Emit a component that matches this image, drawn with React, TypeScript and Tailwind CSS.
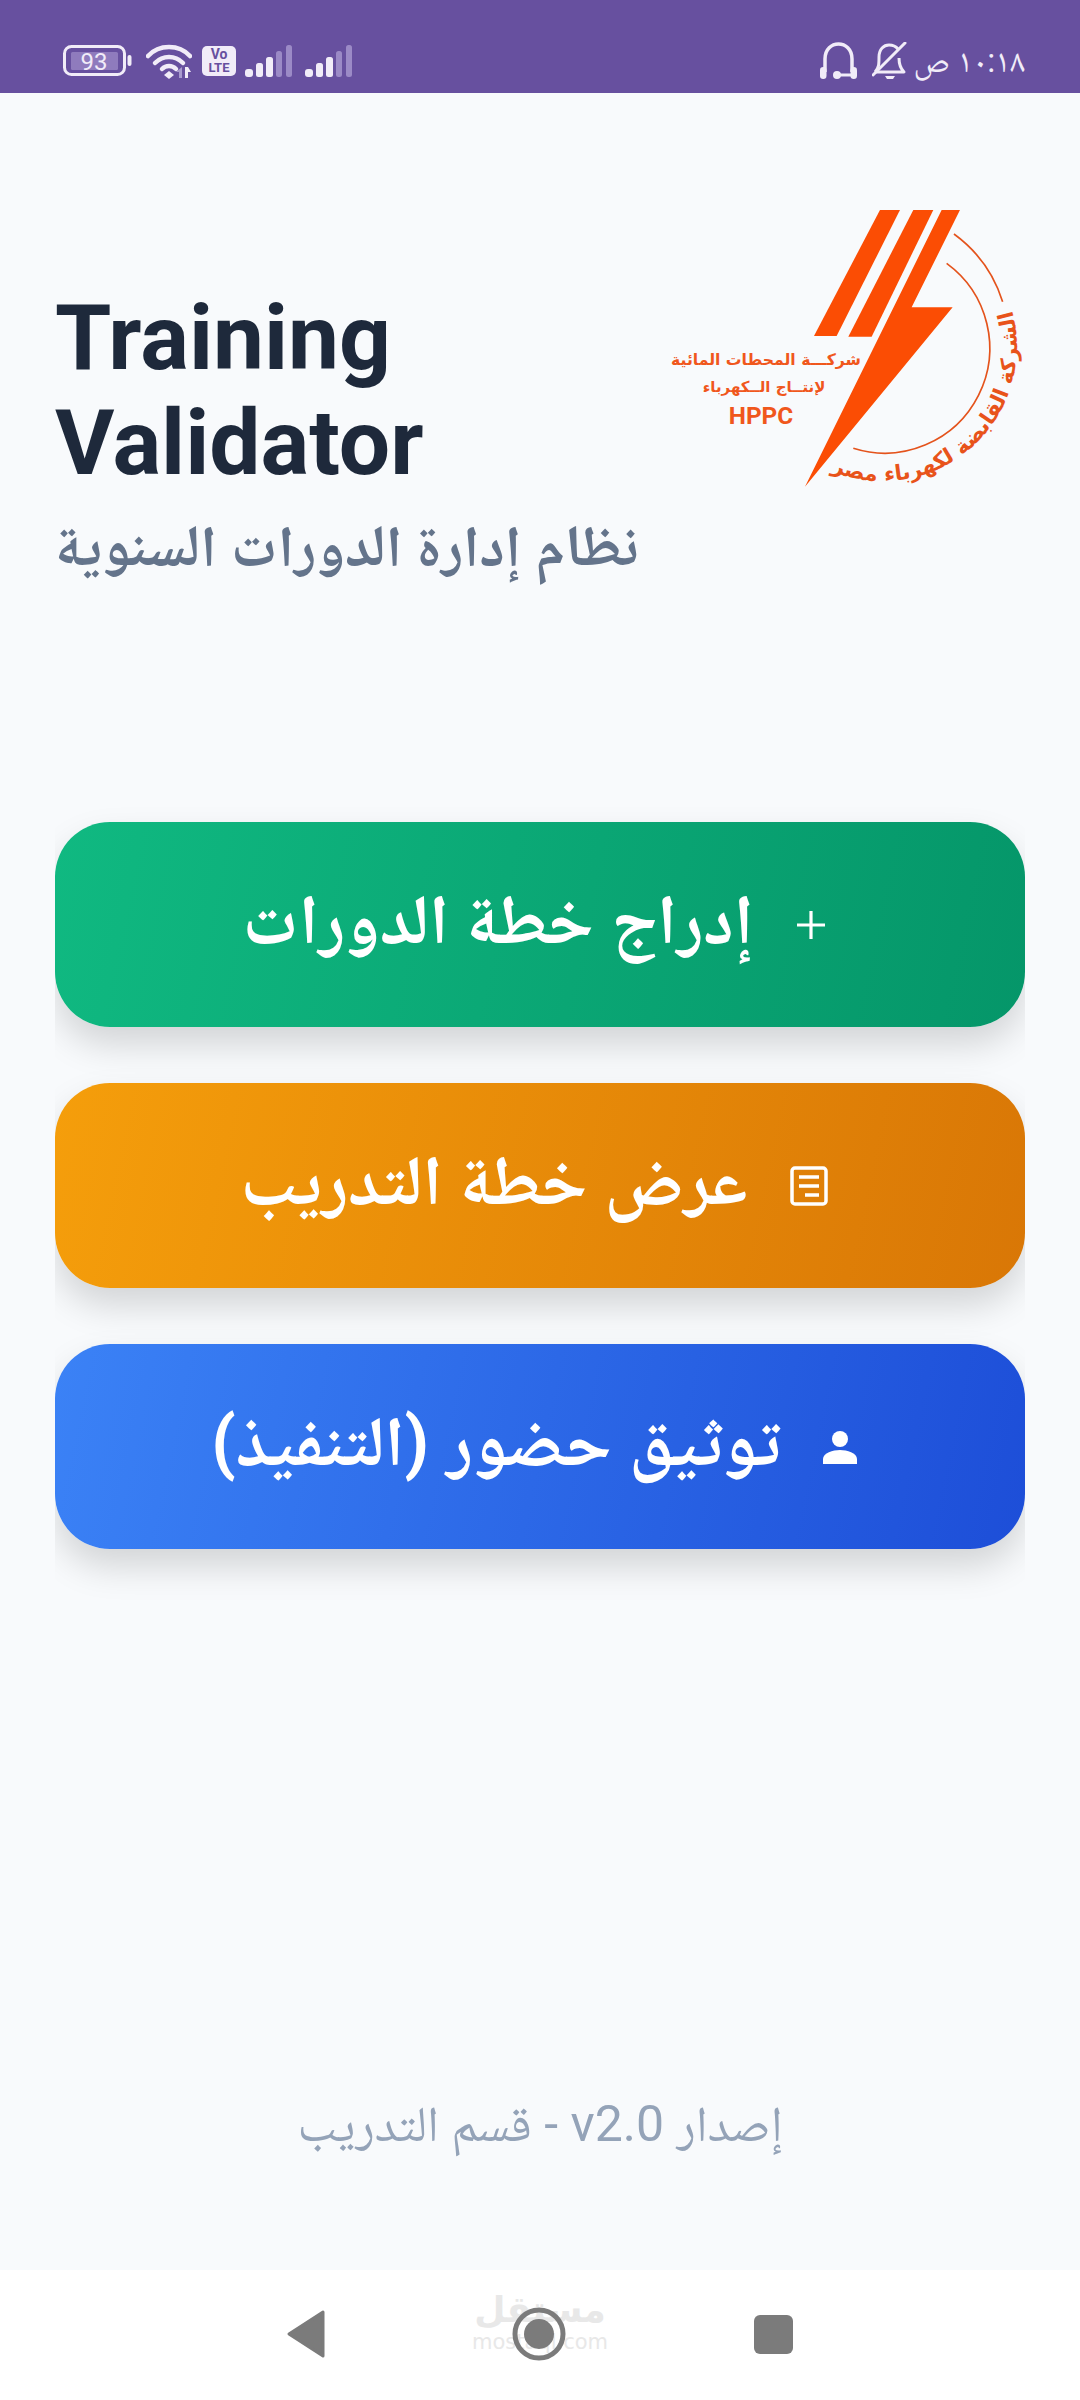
import React from 'react';

const arabic = "font-['Roboto','Noto_Naskh_Arabic','DejaVu_Sans',sans-serif]";

const Battery = () => (
  <svg width="70" height="32" viewBox="0 0 70 32" className="shrink-0">
    <rect x="1.5" y="1.5" width="60" height="28" rx="7" fill="none" stroke="#f1ecf8" strokeWidth="3" />
    <rect x="8" y="7" width="47" height="18" rx="1.5" fill="#8f7bbd" />
    <rect x="64.5" y="10" width="4" height="11" rx="2" fill="#f1ecf8" />
    <text x="31" y="24.5" textAnchor="middle" fontSize="24" fontFamily="Roboto, sans-serif" fill="#f1ecf8">93</text>
  </svg>
);

const Wifi = () => (
  <svg width="46" height="36" viewBox="0 0 46 36" className="shrink-0">
    <g fill="none" stroke="#f1ecf8" strokeWidth="4.5" strokeLinecap="round">
      <path d="M2 13C13 1 33 1 44 13" />
      <path d="M9 20C17 12 29 12 37 20" />
      <path d="M16 26C20 22 26 22 30 26" />
    </g>
    <path d="M23 28l5 4-5 4-5-4z" fill="#f1ecf8" />
    <path d="M36 24v11h-3v-6h-3z" fill="#a99bcf" />
    <path d="M39 35V24h3l3 5h-3v6z" fill="#f1ecf8" />
  </svg>
);

const VoLte = () => (
  <div className="w-[34px] h-[30px] rounded-[5px] bg-[#f1ecf8] flex flex-col items-center justify-center text-[#67509f] font-['Roboto',sans-serif] font-bold leading-[13px] shrink-0">
    <span className="text-[14px]">Vo</span>
    <span className="text-[13px]">LTE</span>
  </div>
);

const Signal = () => (
  <svg width="48" height="32" viewBox="0 0 48 32" className="shrink-0">
    <rect x="0" y="24" width="8" height="8" rx="3" fill="#f1ecf8" />
    <rect x="11" y="18" width="7" height="14" rx="2.5" fill="#f1ecf8" />
    <rect x="21" y="12" width="7" height="20" rx="2.5" fill="#f1ecf8" />
    <rect x="31" y="6" width="6" height="26" rx="2.5" fill="#9b8ac6" />
    <rect x="41" y="0" width="6" height="32" rx="2.5" fill="#9b8ac6" />
  </svg>
);

const Headphones = () => (
  <svg width="39" height="38" viewBox="0 0 39 38" className="shrink-0">
    <path d="M6 30V17C6 -3 33 -3 33 17V30" fill="none" stroke="#f1ecf8" strokeWidth="3.5" />
    <rect x="1" y="25" width="6.500" height="12" rx="3.2" fill="#f1ecf8" />
    <rect x="31.500" y="25" width="6.500" height="12" rx="3.2" fill="#f1ecf8" />
    <circle cx="18" cy="33" r="4" fill="#f1ecf8" />
    <path d="M18 33h15" stroke="#f1ecf8" strokeWidth="3" />
  </svg>
);

const BellOff = () => (
  <svg width="35" height="38" viewBox="0 0 35 38" className="shrink-0">
    <g fill="none" stroke="#f1ecf8" strokeWidth="3" strokeLinejoin="round">
      <path d="M3 30c4-4 4-8 4-15C7 7 12 3 17 3c4 0 7 1.500 9 4" />
      <path d="M27 16c0 6 1 10 5 14H3" />
    </g>
    <path d="M1 33L33 1" stroke="#f1ecf8" strokeWidth="3" strokeLinecap="round" />
    <path d="M13 34h10l-2 3h-6z" fill="#f1ecf8" />
  </svg>
);

const StatusBar = () => (
  <div className="h-[93px] bg-[#67509f] flex items-start justify-between pl-[63px] pr-[55px] pt-[42px] shrink-0">
    <div className="flex items-center h-[38px]">
      <Battery />
      <div className="w-[13px]" />
      <Wifi />
      <div className="w-[10px]" />
      <VoLte />
      <div className="w-[9px]" />
      <Signal />
      <div className="w-[12px]" />
      <Signal />
    </div>
    <div className="flex items-center h-[38px]">
      <Headphones />
      <div className="w-[14px]" />
      <BellOff />
      <div className="w-[6px]" />
      <span dir="rtl" className={`${arabic} text-[33px] leading-[38px] text-[#f1ecf8]`}>١٠:١٨ ص</span>
    </div>
  </div>
);

const Logo = () => (
  <svg width="375" height="300" viewBox="660 205 375 300" className="shrink-0 -mr-[10px]">
    <g transform="translate(640 190) scale(0.3333)">
      <g fill="#fb4d04">
        <polygon points="720,60 780,60 590,438 522,438" />
        <polygon points="820,60 880,60 695,440 625,440" />
        <polygon points="905,60 960,60 815,352 938,352 495,890" />
      </g>
      <g fill="none" stroke="#e4531c" strokeWidth="5">
        <path d="M942,132 A400,400 0 0 1 1088,335" />
        <path d="M920,220 A315,315 0 0 1 640,775" />
      </g>
      <path id="logo-ring" d="M574,843 A403,403 0 0 0 1116,362" fill="none" />
      <text fontFamily="'DejaVu Sans', sans-serif" fontWeight="700" fontSize="64" fill="#e8531a" textAnchor="middle">
        <textPath href="#logo-ring" startOffset="50%">الشركة القابضة لكهرباء مصر</textPath>
      </text>
      <g fontFamily="'DejaVu Sans', sans-serif" fontWeight="700" fill="#f0571c" textAnchor="middle">
        <text x="378" y="524" fontSize="47" direction="rtl">شركـــة المحطات المائية</text>
        <text x="372" y="606" fontSize="45" direction="rtl">لإنتــاج الــكهرباء</text>
        <text x="363" y="701" fontSize="73" fontFamily="Roboto, sans-serif">HPPC</text>
      </g>
    </g>
  </svg>
);

const PlusIcon = () => (
  <svg width="30" height="30" viewBox="0 0 30 30" className="shrink-0">
    <path d="M15 1v28M1 15h28" stroke="#fff" strokeWidth="3.2" />
  </svg>
);

const ArticleIcon = () => (
  <svg width="38" height="40" viewBox="0 0 38 40" className="shrink-0">
    <rect x="2" y="2" width="34" height="36" rx="3" fill="none" stroke="#fff" strokeWidth="3.5" />
    <path d="M9 11h20M9 20h20M15 29h14" stroke="#fff" strokeWidth="3.5" />
  </svg>
);

const PersonIcon = () => (
  <svg width="34" height="34" viewBox="0 0 34 34" className="shrink-0">
    <circle cx="17" cy="9" r="8" fill="#fff" />
    <path d="M0 34v-5c0-6 10-9 17-9s17 3 17 9v5z" fill="#fff" />
  </svg>
);

const buttons = [
  { label: 'إدراج خطة الدورات', icon: <PlusIcon />, cls: 'from-[#10b981] to-[#059669]' },
  { label: 'عرض خطة التدريب', icon: <ArticleIcon />, cls: 'from-[#f59e0b] to-[#d97706]' },
  { label: 'توثيق حضور (التنفيذ)', icon: <PersonIcon />, cls: 'from-[#3b82f6] to-[#1d4ed8]' },
];

const NavBar = () => (
  <div className="relative h-[130px] bg-white flex items-start justify-center pt-[40px] shrink-0">
    <div className="absolute left-[474px] top-[20px] w-[132px] flex flex-col items-center text-[#e8e8e8] font-['DejaVu_Sans',sans-serif] font-bold">
      <span className="text-[36px] leading-[40px]">مستقل</span>
      <span className="text-[21px] leading-[24px] font-normal">mostaql.com</span>
    </div>
    <svg width="38" height="48" viewBox="0 0 38 48" className="relative shrink-0">
      <path d="M36 2v44L2 24z" fill="#7b7b7b" stroke="#7b7b7b" strokeWidth="3" strokeLinejoin="round" />
    </svg>
    <div className="w-[187px]" />
    <svg width="54" height="54" viewBox="0 0 54 54" className="relative shrink-0 -mt-[3px]">
      <circle cx="27" cy="27" r="24" fill="none" stroke="#7b7b7b" strokeWidth="5" />
      <circle cx="27" cy="27" r="15" fill="#7b7b7b" />
    </svg>
    <div className="w-[188px]" />
    <div className="relative w-[39px] h-[39px] rounded-[6px] bg-[#7b7b7b] mt-[5px]" />
  </div>
);

export default function App() {
  return (
    <div className="w-[1080px] h-[2400px] flex flex-col bg-[#f8fafc] overflow-hidden">
      <StatusBar />
      <main className="flex-1 flex flex-col px-[55px]">
        <header className="h-[495px] flex items-start justify-between pt-[112px]">
          <div className="pt-[81px]">
            <h1 className="font-['Roboto',sans-serif] font-bold text-[91px] leading-[105px] text-[#1e293b]">
              Training
              <br />
              Validator
            </h1>
            <p dir="rtl" className={`${arabic} font-bold text-[58px] leading-[80px] text-[#64748b] mt-[10px]`}>
              نظام إدارة الدورات السنوية
            </p>
          </div>
          <Logo />
        </header>

        <div className="flex flex-col gap-[56px] mt-[234px] overflow-x-clip">
          {buttons.map((b) => (
            <div
              key={b.label}
              dir="rtl"
              className={`h-[205px] rounded-[55px] bg-linear-[102deg] ${b.cls} shadow-[0_18px_35px_rgba(0,0,0,0.15)] flex items-center justify-center gap-[42px] pr-[12px] text-white`}
            >
              {b.icon}
              <span className={`${arabic} font-bold text-[70px] leading-[90px] pb-[10px]`}>{b.label}</span>
            </div>
          ))}
        </div>

        <p dir="rtl" className={`${arabic} mt-auto mb-[118px] text-center text-[50px] leading-[56px] text-[#94a3b8]`}>
          إصدار v2.0 - قسم التدريب
        </p>
      </main>
      <NavBar />
    </div>
  );
}
